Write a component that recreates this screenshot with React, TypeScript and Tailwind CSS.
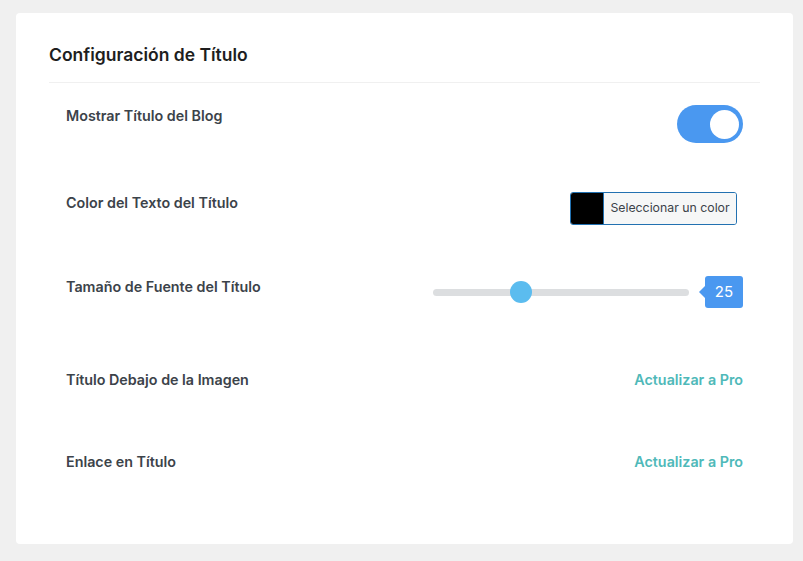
import React from "react";

function Toggle() {
  return (
    <div className="w-[66px] h-[38px] rounded-full bg-[#4a98f0] flex items-center justify-end pr-[4px]">
      <div className="w-[29px] h-[29px] rounded-full bg-white" />
    </div>
  );
}

function ColorPicker() {
  return (
    <div className="mr-[6px] flex h-[33px] w-[167px] rounded-[3px] border border-[#2271b1] overflow-hidden">
      <div className="w-[33px] bg-black border-r border-[#2271b1]" />
      <div className="flex-1 bg-[#f6f7f7] flex items-center justify-center text-[12.3px] text-[#3c434a]">
        Seleccionar un color
      </div>
    </div>
  );
}

function Slider() {
  return (
    <div className="flex items-center h-[32px]">
      <div className="relative w-[256px] h-[7px] rounded-full bg-[#dcdee0]">
        <div className="absolute left-[77px] top-1/2 -translate-y-1/2 w-[22px] h-[22px] rounded-full bg-[#5bbcef]" />
      </div>
      <div className="ml-[10px] flex items-center">
        <div className="w-0 h-0 border-y-[6px] border-y-transparent border-r-[6px] border-r-[#4a98f0]" />
        <div className="w-[38px] h-[32px] rounded-[3px] bg-[#4a98f0] text-white text-[15px] flex items-center justify-center">
          25
        </div>
      </div>
    </div>
  );
}

function Row({ label, h, children }: { label: string; h: string; children: React.ReactNode }) {
  return (
    <div className={`flex items-start justify-between px-[17px] ${h}`}>
      <div className="text-[14.3px] leading-[22px] font-semibold text-[#3c434a]">{label}</div>
      <div>{children}</div>
    </div>
  );
}

function ProLink() {
  return (
    <div className="text-[14.3px] leading-[22px] font-semibold text-[#4fb9b9]">Actualizar a Pro</div>
  );
}

export default function App() {
  return (
    <div
      className="w-[803px] h-[561px] bg-[#f0f0f0] pt-[13px] pl-[16px] pr-[10px]"
      style={{ fontFamily: "Inter, 'Noto Sans', sans-serif" }}
    >
      <div className="bg-white rounded-[4px] h-[531px] px-[33px] pt-[30px]">
        <div className="text-[17.5px] leading-[24px] font-semibold text-[#1e1e1e] pb-[15px] border-b border-[#f0f0f0]">
          Configuración de Título
        </div>
        <div className="pt-[22px]">
          <Row label="Mostrar Título del Blog" h="h-[87px]">
            <Toggle />
          </Row>
          <Row label="Color del Texto del Título" h="h-[84px]">
            <ColorPicker />
          </Row>
          <Row label="Tamaño de Fuente del Título" h="h-[93px]">
            <Slider />
          </Row>
          <Row label="Título Debajo de la Imagen" h="h-[82px]">
            <ProLink />
          </Row>
          <Row label="Enlace en Título" h="h-[30px]">
            <ProLink />
          </Row>
        </div>
      </div>
    </div>
  );
}
